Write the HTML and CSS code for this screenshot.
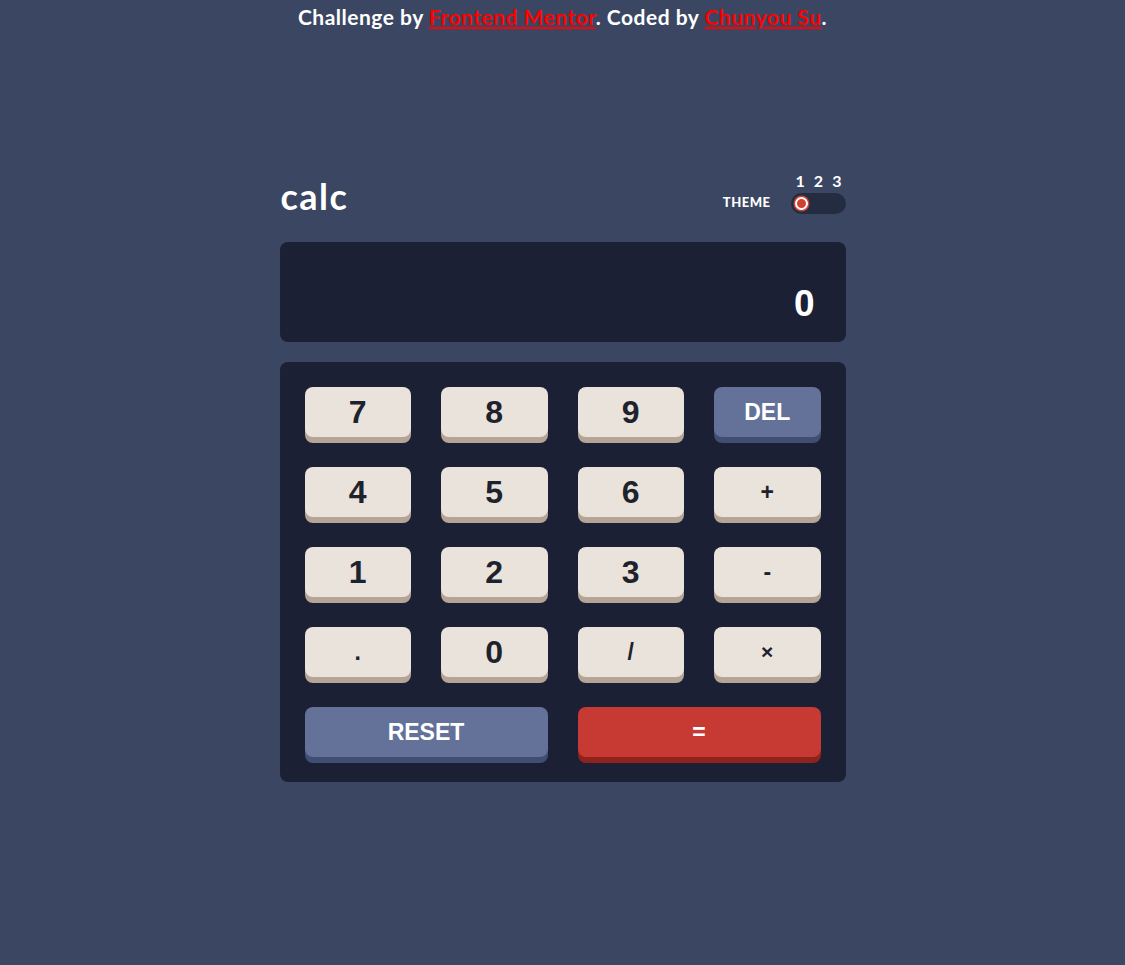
FILE: index.html
```html
<!DOCTYPE html>
<html lang="en">
<head>
<meta charset="utf-8">
<title>Calculator app</title>
<link rel="stylesheet" href="styles.css">
</head>
<body>
<p class="attribution">Challenge by <a href="#">Frontend Mentor</a>. Coded by <a href="#">Chunyou Su</a>.</p>
<main class="calc">
  <header class="calc-header">
    <h1 class="logo">calc</h1>
    <div class="theme">
      <span class="theme-label">THEME</span>
      <div class="theme-switch">
        <div class="theme-nums"><span>1</span><span>2</span><span>3</span></div>
        <div class="toggle"><span class="knob"></span></div>
      </div>
    </div>
  </header>
  <section class="screen"><span class="screen-value">0</span></section>
  <section class="keypad">
    <button class="key num">7</button>
    <button class="key num">8</button>
    <button class="key num">9</button>
    <button class="key blue">DEL</button>
    <button class="key num">4</button>
    <button class="key num">5</button>
    <button class="key num">6</button>
    <button class="key op">+</button>
    <button class="key num">1</button>
    <button class="key num">2</button>
    <button class="key num">3</button>
    <button class="key op">-</button>
    <button class="key op">.</button>
    <button class="key num">0</button>
    <button class="key op">/</button>
    <button class="key op small">×</button>
    <button class="key blue wide">RESET</button>
    <button class="key red wide">=</button>
  </section>
</main>
</body>
</html>
```
FILE: styles.css
```css
* { box-sizing: border-box; }
body {
  margin: 0;
  background: #3b4762;
  color: #fff;
  font-family: "Lato", "Liberation Sans", sans-serif;
  min-height: 965px;
}
.attribution {
  margin: 0;
  padding-top: 4px;
  text-align: center;
  font-size: 21px;
  font-weight: 700;
  line-height: 26px;
  letter-spacing: 0.5px;
}
.attribution a {
  color: #f00;
  text-decoration: underline;
  text-decoration-thickness: 2px;
  text-underline-offset: 2px;
}
.calc {
  width: 566px;
  margin: 143px auto 0;
}
.calc-header {
  display: flex;
  justify-content: space-between;
  align-items: flex-end;
  padding-left: 1px;
}
.logo {
  margin: 0;
  font-size: 36px;
  font-weight: 700;
  line-height: 36px;
  letter-spacing: 1.5px;
}
.theme {
  display: flex;
  align-items: flex-end;
  gap: 20px;
}
.theme-label {
  font-size: 13px;
  font-weight: 900;
  letter-spacing: 0.5px;
  margin-bottom: 4px;
}
.theme-switch {
  display: flex;
  flex-direction: column;
  width: 55px;
}
.theme-nums {
  display: flex;
  justify-content: space-between;
  padding: 0 4px 0 5px;
  font-size: 16px;
  font-weight: 700;
  line-height: 16px;
  margin-bottom: 4px;
}
.toggle {
  height: 21px;
  border-radius: 11px;
  background: #242c42;
  display: flex;
  align-items: center;
  padding-left: 4px;
}
.knob {
  width: 13px;
  height: 13px;
  border-radius: 50%;
  background: #d03f2f;
  border: 2px solid #fff;
  box-shadow: 0 0 0 1.5px #d03f2f;
}
.screen {
  margin-top: 28px;
  height: 100px;
  border-radius: 8px;
  background: #1b2034;
  display: flex;
  justify-content: flex-end;
  align-items: center;
  padding: 22px 31px 0;
}
.screen-value {
  font-family: "Liberation Sans", Arial, sans-serif;
  font-weight: 700;
  font-size: 37px;
  line-height: 1;
}
.keypad {
  margin-top: 20px;
  height: 420px;
  background: #1b2034;
  border-radius: 8px;
  padding: 25px;
  display: grid;
  grid-template-columns: repeat(4, 1fr);
  grid-auto-rows: 50px;
  gap: 30px;
}
.key {
  border: 0;
  border-radius: 8px;
  font-family: "Liberation Sans", Arial, sans-serif;
  font-weight: 700;
  padding: 0;
  line-height: 48px;
  cursor: pointer;
}
.num, .op {
  background: #eae3dc;
  color: #1e222c;
  box-shadow: 0 6px 0 #b4a597;
}
.num { font-size: 32px; }
.op { font-size: 23px; }
.op.small { font-size: 21px; }
.blue {
  background: #647198;
  color: #fff;
  box-shadow: 0 6px 0 #414e73;
  font-size: 23px;
}
.red {
  background: #c63a33;
  color: #fff;
  box-shadow: 0 6px 0 #8f221c;
  font-size: 23px;
}
.wide { grid-column: span 2; }
```
